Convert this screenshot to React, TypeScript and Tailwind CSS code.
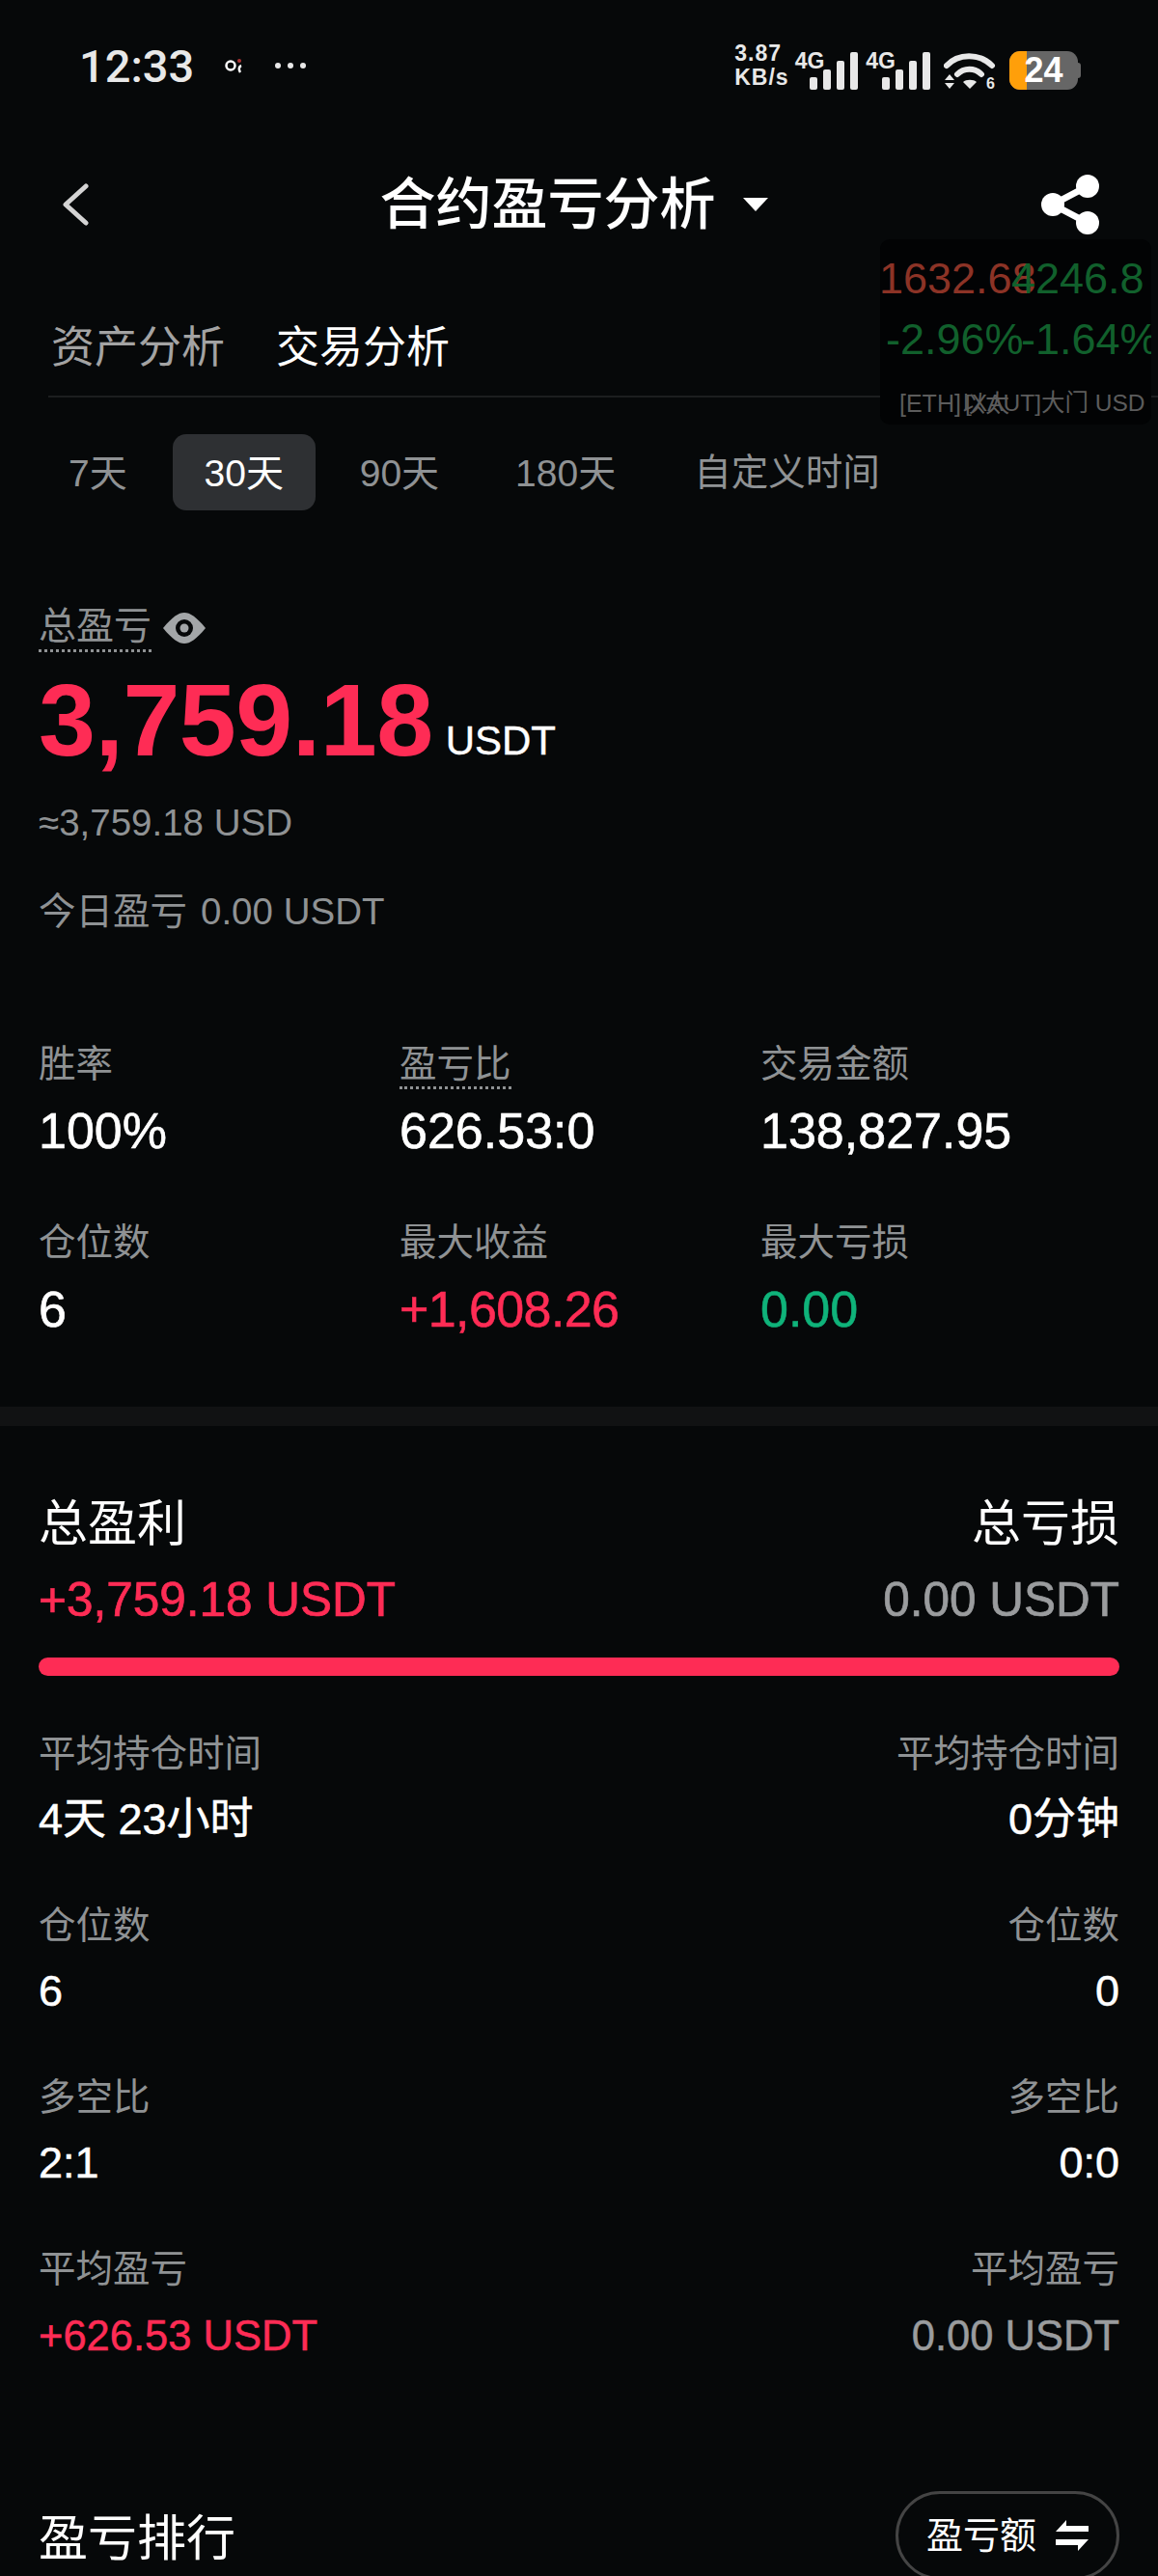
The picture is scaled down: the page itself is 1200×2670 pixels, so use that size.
const FONT = "font-['Liberation_Sans','Noto_Sans_CJK_SC',sans-serif]";

const Signal = () => (
  <svg width="50" height="39" viewBox="0 0 50 39" fill="#e8e8e8">
    <rect x="0" y="26" width="8" height="13" rx="2" />
    <rect x="14" y="18" width="8" height="21" rx="2" />
    <rect x="28" y="9" width="8" height="30" rx="2" />
    <rect x="42" y="0" width="8" height="39" rx="2" />
  </svg>
);

const StatusBar = () => (
  <div className="flex h-[136px] items-center justify-between pl-[82px] pr-[80px]">
    <div className="flex items-center">
      <span className="font-['Roboto'] text-[47px] leading-none font-medium text-[#e8e8e8]">12:33</span>
      <svg className="ml-[32px]" width="20" height="16" viewBox="0 0 20 16" fill="none" stroke="#fff" strokeWidth="2.5">
        <circle cx="6" cy="8" r="4.5" />
        <path d="M17 8c-2.5 1-3 4-1 7" />
        <circle cx="15" cy="3" r="2" fill="#a33" stroke="none" />
      </svg>
      <span className="ml-[32px] flex gap-[7px]">
        <i className="size-[6px] rounded-full bg-[#e8e8e8]" />
        <i className="size-[6px] rounded-full bg-[#e8e8e8]" />
        <i className="size-[6px] rounded-full bg-[#e8e8e8]" />
      </span>
    </div>
    <div className="flex items-end text-[#e8e8e8]">
      <div className="flex flex-col text-[23px] leading-[25px] font-bold tracking-[1px]">
        <span>3.87</span>
        <span>KB/s</span>
      </div>
      <div className="ml-[6px] flex items-end">
        <span className="mr-[-15px] self-start text-[23px] leading-[18px] font-bold">4G</span>
        <Signal />
      </div>
      <div className="ml-[8px] flex items-end">
        <span className="mr-[-14px] self-start text-[23px] leading-[18px] font-bold">4G</span>
        <Signal />
      </div>
      <svg className="ml-[14px]" width="54" height="39" viewBox="0 0 54 39" fill="none" stroke="#e8e8e8" strokeWidth="6" strokeLinecap="round">
        <path d="M3 14C15 1 37 1 50 14" />
        <path d="M14 23C21 16 32 16 39 23" />
        <path d="M27 38l-7-7c3-3 11-3 14 0z" fill="#e8e8e8" stroke="none" />
        <path d="M1 29l5-6 5 6zM1 32l5 6 5-6z" fill="#e8e8e8" stroke="none" />
        <text x="44" y="38" fontSize="16" fontWeight="700" fill="#e8e8e8" stroke="none">6</text>
      </svg>
      <div className="ml-[14px] flex items-center">
        <div className="relative flex h-[40px] w-[71px] items-center justify-center overflow-hidden rounded-[11px] bg-[#666]">
          <div className="absolute inset-y-0 left-0 w-[18px] bg-[#ff9f0a]" />
          <span className="relative text-[36px] leading-none font-bold text-white">24</span>
        </div>
        <div className="h-[16px] w-[3px] rounded-r bg-[#666]" />
      </div>
    </div>
  </div>
);

const Header = () => (
  <div className="flex h-[152px] items-center justify-between pl-[64px] pr-[61px]">
    <svg width="28" height="44" viewBox="0 0 28 44" fill="none" stroke="#d4d4d4" strokeWidth="5" strokeLinecap="round" strokeLinejoin="round">
      <path d="M25 3L4 22l21 19" />
    </svg>
    <div className="flex items-center gap-[28px] pl-[18px]">
      <span className="text-[58px] leading-none font-medium text-white">合约盈亏分析</span>
      <span className="size-0 border-x-[13px] border-t-[14px] border-x-transparent border-t-white" />
    </div>
    <svg width="60" height="62" viewBox="0 0 60 62" fill="#fff">
      <circle cx="48" cy="12" r="12" />
      <circle cx="12" cy="31" r="12" />
      <circle cx="48" cy="50" r="12" />
      <path d="M12 31L48 12M12 31L48 50" stroke="#fff" strokeWidth="7" />
    </svg>
  </div>
);

const Tabs = () => (
  <div className="ml-[50px] flex h-[124px] items-center gap-[53px] border-b-2 border-[#1c1e1f] pt-[22px] pl-[3px] text-[45px] leading-none">
    <span className="text-[#a3a3a3]">资产分析</span>
    <span className="text-white">交易分析</span>
  </div>
);

const Pills = () => (
  <div className="mt-[38px] flex h-[79px] items-center pl-[71px] text-[39px] leading-none text-[#8f9294]">
    <span className="pt-[2px]">7天</span>
    <span className="ml-[47px] flex h-[79px] w-[148px] items-center justify-center rounded-[14px] bg-[#2e3033] pt-[2px] text-white">30天</span>
    <span className="ml-[46px] pt-[2px]">90天</span>
    <span className="ml-[79px] pt-[2px]">180天</span>
    <span className="ml-[81px] pt-[2px] text-[38.5px]">自定义时间</span>
  </div>
);

const Summary = () => (
  <div className="mt-[98px] pl-[40px]">
    <div className="flex h-[48px] items-center">
      <span className="border-b-[3px] border-dotted border-[#8f9294] pb-[2px] text-[39px] leading-[44px] text-[#8f9294]">总盈亏</span>
      <svg className="ml-[12px]" width="44" height="32" viewBox="0 0 44 32">
        <path d="M0 16C10 4 16 0 22 0s12 4 22 16C34 28 28 32 22 32S10 28 0 16z" fill="#a3a6a8" />
        <circle cx="22" cy="16" r="9" fill="#060809" />
        <circle cx="22" cy="16" r="4.5" fill="#a3a6a8" />
      </svg>
    </div>
    <div className="mt-[14px] flex h-[114px] items-end">
      <span className="text-[106px] leading-[114px] font-bold tracking-[-0.5px] text-[#fe2c55]">3,759.18</span>
      <span className="mb-[14px] ml-[13px] text-[42px] leading-none text-white [-webkit-text-stroke:0.4px]">USDT</span>
    </div>
    <div className="mt-[28px] text-[38.5px] leading-[44px] text-[#8f9294]">≈3,759.18 USD</div>
    <div className="mt-[48px] flex items-center gap-[14px] text-[38.5px] leading-[44px] text-[#8f9294]">
      <span>今日盈亏</span>
      <span>0.00 USDT</span>
    </div>
  </div>
);

const stats = [
  { label: '胜率', value: '100%', color: 'text-white', border: 'border-transparent' },
  { label: '盈亏比', value: '626.53:0', color: 'text-white', border: 'border-[#8f9294]' },
  { label: '交易金额', value: '138,827.95', color: 'text-white', border: 'border-transparent' },
  { label: '仓位数', value: '6', color: 'text-white', border: 'border-transparent' },
  { label: '最大收益', value: '+1,608.26', color: 'text-[#fe2c55] tracking-[-0.6px]', border: 'border-transparent' },
  { label: '最大亏损', value: '0.00', color: 'text-[#0fb37a]', border: 'border-transparent' },
];

const StatsGrid = () => (
  <div className="mt-[113px] grid grid-cols-[374px_374px_1fr] gap-y-[67px] pl-[40px]">
    {stats.map((s) => (
      <div key={s.label} className="flex flex-col items-start">
        <span className={`border-b-[3px] border-dotted text-[38.5px] leading-[46px] text-[#8f9294] ${s.border}`}>
          {s.label}
        </span>
        <span className={`pt-[17px] text-[52px] leading-[52px] [-webkit-text-stroke:0.6px] ${s.color}`}>{s.value}</span>
      </div>
    ))}
  </div>
);

const rows = [
  { label: '平均持仓时间', left: '4天 23小时', right: '0分钟' },
  { label: '仓位数', left: '6', right: '0' },
  { label: '多空比', left: '2:1', right: '0:0' },
];

const Breakdown = () => (
  <div className="px-[40px]">
    <div className="flex justify-between pt-[72px] text-[51px] leading-[60px] text-white">
      <span>总盈利</span>
      <span>总亏损</span>
    </div>
    <div className="mt-[20px] flex justify-between text-[49.5px] leading-[56px] [-webkit-text-stroke:0.7px]">
      <span className="text-[#fe2c55]">+3,759.18 USDT</span>
      <span className="text-[#9a9c9e]">0.00 USDT</span>
    </div>
    <div className="mt-[32px] h-[19px] rounded-full bg-[#fe2c55]" />
    <div className="mt-[58px] flex flex-col gap-[62px]">
      {rows.map((r) => (
        <div key={r.label}>
          <div className="flex justify-between text-[38.5px] leading-[46px] text-[#8f9294]">
            <span>{r.label}</span>
            <span>{r.label}</span>
          </div>
          <div className="mt-[20px] flex justify-between text-[45px] leading-[50px] text-white [-webkit-text-stroke:0.5px]">
            <span>{r.left}</span>
            <span>{r.right}</span>
          </div>
        </div>
      ))}
      <div>
        <div className="flex justify-between text-[38.5px] leading-[46px] text-[#8f9294]">
          <span>平均盈亏</span>
          <span>平均盈亏</span>
        </div>
        <div className="mt-[21px] flex justify-between text-[43.5px] leading-[50px] [-webkit-text-stroke:0.5px]">
          <span className="text-[#fe2c55]">+626.53 USDT</span>
          <span className="text-[#9a9c9e]">0.00 USDT</span>
        </div>
      </div>
    </div>
  </div>
);

const Ranking = () => (
  <div className="mt-[136px] flex items-start justify-between px-[40px]">
    <span className="mt-[20px] text-[51px] leading-[60px] text-white">盈亏排行</span>
    <div className="flex h-[92px] w-[232px] items-center justify-center gap-[20px] rounded-full border-[3px] border-[#444]">
      <span className="text-[38px] leading-none text-white">盈亏额</span>
      <svg width="34" height="32" viewBox="0 0 34 32" fill="#fff">
        <path d="M0 12L11 0v6h23v6z" />
        <path d="M34 20L23 32v-6H0v-6z" />
      </svg>
    </div>
  </div>
);

// floating price widget from another app, sits over the page
const FloatingTicker = () => (
  <div className="absolute top-[248px] left-[912px] h-[192px] w-[281px] overflow-hidden rounded-[10px] bg-[#020304] text-[45px] leading-none">
    <div className="absolute top-[18px] left-[-1px] text-[#8c3326]">1632.68</div>
    <div className="absolute top-[18px] left-[136px] whitespace-nowrap text-[#11602c]">4246.8</div>
    <div className="absolute top-[81px] left-[6px] text-[#11602c]">-2.96%</div>
    <div className="absolute top-[81px] left-[146px] whitespace-nowrap text-[#11602c]">-1.64%</div>
    <div className="absolute top-[158px] left-[20px] text-[25px] leading-none text-[#5c5c5c]">[ETH]以太</div>
    <div className="absolute top-[158px] left-[88px] text-[24.5px] leading-none whitespace-nowrap text-[#5c5c5c]">[XAUT]大门 USD</div>
  </div>
);

export default function App() {
  return (
    <div className={`relative h-[2670px] w-[1200px] overflow-hidden bg-[#060809] ${FONT}`}>
      <StatusBar />
      <Header />
      <Tabs />
      <Pills />
      <Summary />
      <StatsGrid />
      <div className="mt-[75px] h-[20px] bg-[#111213]" />
      <Breakdown />
      <Ranking />
      <FloatingTicker />
    </div>
  );
}
